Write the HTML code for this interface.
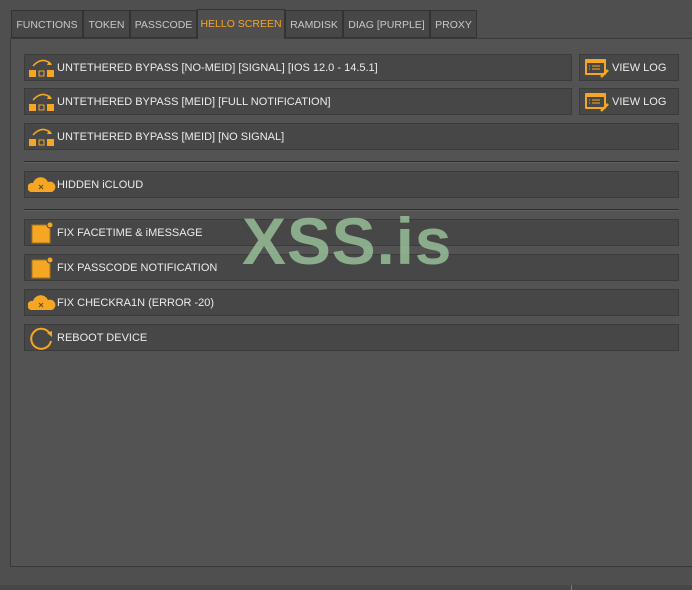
<!DOCTYPE html>
<html><head><style>
body{margin:0;width:692px;height:590px;background:#4f4f4f;position:relative;overflow:hidden;font-family:"Liberation Sans",sans-serif;font-size:11px;color:#ececec}
.tab{position:absolute;top:10px;height:28px;background:#474747;border:1px solid #333;box-sizing:border-box;color:#c8c8c8;line-height:29px;text-align:center;font-size:10.5px}
.panel{position:absolute;left:10px;top:38px;width:690px;height:529px;background:#535353;border:1px solid #3a3a3a;box-sizing:border-box}
.btn{position:absolute;background:#474747;border:1px solid #3b3b3b;box-sizing:border-box;height:27px;line-height:27px;padding-left:32px;white-space:nowrap}
.btn svg{position:absolute;left:3px;top:1px}
.sep{position:absolute;left:24px;width:655px;height:1px;background:#2e2e2e;border-bottom:1px solid #5e5e5e}
.wm{position:absolute;left:242px;top:203px;font-family:"Liberation Sans",sans-serif;font-weight:bold;font-size:66px;color:rgba(150,190,150,.85);letter-spacing:0.8px}
</style></head><body>
<div class="panel"></div>
<div class="tab" style="left:11px;width:72px">FUNCTIONS</div>
<div class="tab" style="left:83px;width:47px">TOKEN</div>
<div class="tab" style="left:130px;width:67px">PASSCODE</div>
<div class="tab" style="left:197px;top:9px;height:30px;width:88px;background:#4f4f4f;color:#f5a623;border-bottom:none">HELLO SCREEN</div>
<div class="tab" style="left:285px;width:58px">RAMDISK</div>
<div class="tab" style="left:343px;width:87px">DIAG [PURPLE]</div>
<div class="tab" style="left:430px;width:47px">PROXY</div>

<div class="btn" style="left:24px;top:54px;width:548px"><svg width="28" height="24"><path d="M5 10 Q14 0 23 8" fill="none" stroke="#f5a623" stroke-width="1.5"/><path d="M21 5 L24 9 L19 9Z" fill="#f5a623"/><rect x="1" y="14" width="7" height="7" fill="#f5a623"/><rect x="11" y="15" width="5" height="5" fill="none" stroke="#f5a623"/><rect x="19" y="14" width="7" height="7" fill="#f5a623"/></svg>UNTETHERED BYPASS [NO-MEID] [SIGNAL] [IOS 12.0 - 14.5.1]</div>
<div class="btn" style="left:579px;top:54px;width:100px"><svg width="28" height="24"><rect x="2" y="3" width="21" height="16" rx="1" fill="#f5a623"/><rect x="4" y="7" width="17" height="10" fill="#474747"/><path d="M6 10h1M9 10h8M6 13h1M9 13h8" stroke="#f5a623"/><path d="M18 21 L25 14" stroke="#f5a623" stroke-width="2.5"/></svg>VIEW LOG</div>
<div class="btn" style="left:24px;top:88px;width:548px"><svg width="28" height="24"><path d="M5 10 Q14 0 23 8" fill="none" stroke="#f5a623" stroke-width="1.5"/><path d="M21 5 L24 9 L19 9Z" fill="#f5a623"/><rect x="1" y="14" width="7" height="7" fill="#f5a623"/><rect x="11" y="15" width="5" height="5" fill="none" stroke="#f5a623"/><rect x="19" y="14" width="7" height="7" fill="#f5a623"/></svg>UNTETHERED BYPASS [MEID] [FULL NOTIFICATION]</div>
<div class="btn" style="left:579px;top:88px;width:100px"><svg width="28" height="24"><rect x="2" y="3" width="21" height="16" rx="1" fill="#f5a623"/><rect x="4" y="7" width="17" height="10" fill="#474747"/><path d="M6 10h1M9 10h8M6 13h1M9 13h8" stroke="#f5a623"/><path d="M18 21 L25 14" stroke="#f5a623" stroke-width="2.5"/></svg>VIEW LOG</div>
<div class="btn" style="left:24px;top:123px;width:655px"><svg width="28" height="24"><path d="M5 10 Q14 0 23 8" fill="none" stroke="#f5a623" stroke-width="1.5"/><path d="M21 5 L24 9 L19 9Z" fill="#f5a623"/><rect x="1" y="14" width="7" height="7" fill="#f5a623"/><rect x="11" y="15" width="5" height="5" fill="none" stroke="#f5a623"/><rect x="19" y="14" width="7" height="7" fill="#f5a623"/></svg>UNTETHERED BYPASS [MEID] [NO SIGNAL]</div>
<div class="sep" style="top:161px"></div>
<div class="btn" style="left:24px;top:171px;width:655px"><svg width="28" height="24"><path d="M3 19 a4.5 4.5 0 0 1 2-9 a8 8 0 0 1 15-1 a5 5 0 0 1 4 10Z" fill="#f5a623"/><path d="M11 12l4 4M15 12l-4 4" stroke="#6b4a10"/></svg>HIDDEN iCLOUD</div>
<div class="sep" style="top:209px"></div>
<div class="btn" style="left:24px;top:219px;width:655px"><svg width="28" height="24"><rect x="4" y="4" width="18" height="18" fill="#f5a623" stroke="#a8761c"/><circle cx="22" cy="4" r="3" fill="#f5a623" stroke="#474747"/></svg>FIX FACETIME &amp; iMESSAGE</div>
<div class="btn" style="left:24px;top:254px;width:655px"><svg width="28" height="24"><rect x="4" y="4" width="18" height="18" fill="#f5a623" stroke="#a8761c"/><circle cx="22" cy="4" r="3" fill="#f5a623" stroke="#474747"/></svg>FIX PASSCODE NOTIFICATION</div>
<div class="btn" style="left:24px;top:289px;width:655px"><svg width="28" height="24"><path d="M3 19 a4.5 4.5 0 0 1 2-9 a8 8 0 0 1 15-1 a5 5 0 0 1 4 10Z" fill="#f5a623"/><path d="M11 12l4 4M15 12l-4 4" stroke="#6b4a10"/></svg>FIX CHECKRA1N (ERROR -20)</div>
<div class="btn" style="left:24px;top:324px;width:655px"><svg width="28" height="24"><path d="M22 8 A10 10 0 1 0 23 15" fill="none" stroke="#f5a623" stroke-width="2"/><path d="M19 7 L24 5 L24 11Z" fill="#f5a623"/></svg>REBOOT DEVICE</div>
<div class="wm">XSS.is</div>
<div style="position:absolute;left:0;top:585px;width:692px;height:5px;background:#474747"></div>
<div style="position:absolute;left:571px;top:585px;width:1px;height:5px;background:#777"></div>
</body></html>
